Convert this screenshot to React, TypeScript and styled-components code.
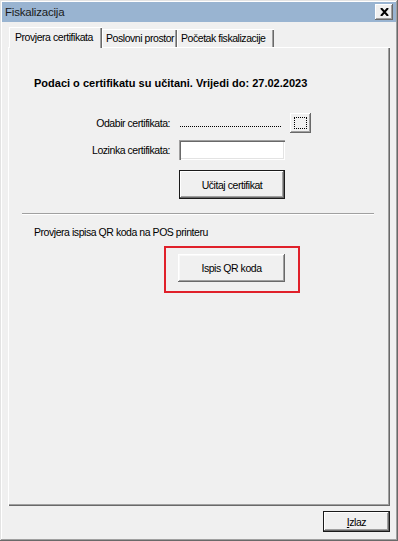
import React from "react";
import styled, { createGlobalStyle, css } from "styled-components";

const Global = createGlobalStyle`
  html, body { margin: 0; padding: 0; background: #f0f0f0; }
  body { font-family: "Liberation Sans", Arial, sans-serif; font-size: 10.5px; letter-spacing: -0.45px; color: #000; }
  * { box-sizing: border-box; }
`;

const Window = styled.div`
  width: 398px;
  height: 541px;
  background: #f0f0f0;
  display: flex;
  flex-direction: column;
  box-shadow: inset -1px -1px #696969, inset 1px 1px #e3e3e3, inset -2px -2px #a0a0a0, inset 2px 2px #ffffff;
  padding: 2px;
`;

const TitleBar = styled.div`
  height: 20px;
  background: #99b4d1;
  display: flex;
  align-items: center;
  justify-content: space-between;
  padding: 0 3px 0 3px;
`;

const TitleText = styled.span`
  font-size: 11.5px;
  letter-spacing: -0.2px;
  color: #1a1a1a;
`;

const CloseButton = styled.div`
  width: 18px;
  height: 16px;
  background: #f0f0f0;
  box-shadow: inset -1px -1px #696969, inset 1px 1px #ffffff, inset -2px -2px #a0a0a0;
  display: flex;
  align-items: center;
  justify-content: center;
`;

const Body = styled.div`
  flex: 1;
  display: flex;
  flex-direction: column;
  padding: 5px 6px 0 6px;
`;

const TabStrip = styled.div`
  height: 20px;
  display: flex;
  align-items: flex-end;
  padding-left: 1px;
  position: relative;
  z-index: 1;
`;

const Tab = styled.div<{ $active?: boolean; $w: number }>`
  width: ${(p) => p.$w}px;
  height: 18px;
  display: flex;
  align-items: center;
  padding-left: ${(p) => (p.$active ? 6 : 4)}px;
  background: #f0f0f0;
  white-space: nowrap;
  box-shadow: inset 1px 1px #ffffff, inset -1px 0 #696969, inset -2px 0 #a0a0a0;
  ${(p) =>
    p.$active &&
    css`
      margin-bottom: -1px;
      height: 21px;
      padding-bottom: 1px;
    `}
`;

const Panel = styled.div`
  height: 459px;
  background: #f0f0f0;
  box-shadow: inset 1px 1px #ffffff, inset -1px -1px #696969, inset -2px -2px #a0a0a0;
  padding: 30px 2px 0 1px;
  display: flex;
  flex-direction: column;
`;

const Heading = styled.div`
  font-weight: bold;
  font-size: 11px;
  letter-spacing: 0;
  line-height: 13px;
  padding-left: 25px;
`;

const FormGrid = styled.div`
  display: grid;
  grid-template-columns: 161px 106px 21px;
  column-gap: 9px;
  row-gap: 7px;
  margin-top: 23px;
  align-items: center;
`;

const Label = styled.div`
  text-align: right;
  line-height: 20px;
  height: 20px;
`;

const Dotted = styled.div`
  height: 20px;
  border-bottom: 1px dotted #000;
  margin: 0 4px 0 1px;
  transform: translateY(-6px);
`;

const BrowseButton = styled.div`
  width: 21px;
  height: 20px;
  margin-left: -4px;
  background: #f0f0f0;
  box-shadow: inset -1px -1px #696969, inset 1px 1px #ffffff, inset -2px -2px #a0a0a0;
  display: flex;
  align-items: center;
  justify-content: center;
`;

const FocusRect = styled.div`
  width: 13px;
  height: 12px;
  border: 1px dotted #000;
`;

const TextInput = styled.div`
  height: 20px;
  width: 106px;
  background: #fff;
  box-shadow: inset 1px 1px #a0a0a0, inset 2px 2px #696969, inset -1px -1px #ffffff, inset -2px -2px #e3e3e3;
`;

const Button = styled.div<{ $w: number; $h: number; $default?: boolean }>`
  width: ${(p) => p.$w}px;
  height: ${(p) => p.$h}px;
  background: #f0f0f0;
  display: flex;
  align-items: center;
  justify-content: center;
  ${(p) =>
    p.$default
      ? css`
          box-shadow: inset 0 0 0 1px #1a1a1a, inset -2px -2px #696969, inset 2px 2px #ffffff, inset -3px -3px #a0a0a0;
        `
      : css`
          box-shadow: inset -1px -1px #696969, inset 1px 1px #ffffff, inset -2px -2px #a0a0a0, inset 2px 2px #f8f8f8;
        `}
`;

const ButtonCell = styled.div`
  grid-column: 2 / span 2;
  margin-top: 3px;
`;

const Separator = styled.div`
  height: 2px;
  margin: 14px 14px 0 13px;
  border-top: 1px solid #a0a0a0;
  border-bottom: 1px solid #ffffff;
`;

const Caption = styled.div`
  line-height: 13px;
  margin-top: 11px;
  padding-left: 25px;
`;

const Highlight = styled.div`
  width: 136px;
  height: 47px;
  margin: 7px 0 0 155px;
  border: 2px solid #e0202a;
  padding: 6px 0 0 12px;
`;

const Footer = styled.div`
  display: flex;
  justify-content: flex-end;
  padding: 5px 0 0 0;
`;

const Underline = styled.span`
  text-decoration: underline;
`;

export default function App() {
  return (
    <>
      <Global />
      <Window>
        <TitleBar>
          <TitleText>Fiskalizacija</TitleText>
          <CloseButton>
            <svg width="9" height="8" viewBox="0 0 9 8">
              <path d="M1 0 L8 8 M8 0 L1 8" stroke="#000" strokeWidth="2" />
            </svg>
          </CloseButton>
        </TitleBar>
        <Body>
          <TabStrip>
            <Tab $active $w={93}>Provjera certifikata</Tab>
            <Tab $w={75}>Poslovni prostor</Tab>
            <Tab $w={97}>Početak fiskalizacije</Tab>
          </TabStrip>
          <Panel>
            <Heading>Podaci o certifikatu su učitani. Vrijedi do: 27.02.2023</Heading>
            <FormGrid>
              <Label>Odabir certifikata:</Label>
              <Dotted />
              <BrowseButton>
                <FocusRect />
              </BrowseButton>
              <Label>Lozinka certifikata:</Label>
              <TextInput />
              <div />
              <div />
              <ButtonCell>
                <Button $w={106} $h={29} $default>
                  Učitaj certifikat
                </Button>
              </ButtonCell>
            </FormGrid>
            <Separator />
            <Caption>Provjera ispisa QR koda na POS printeru</Caption>
            <Highlight>
              <Button $w={107} $h={28}>Ispis QR koda</Button>
            </Highlight>
          </Panel>
          <Footer>
            <Button $w={67} $h={21} $default>
              <span>
                <Underline>I</Underline>zlaz
              </span>
            </Button>
          </Footer>
        </Body>
      </Window>
    </>
  );
}
